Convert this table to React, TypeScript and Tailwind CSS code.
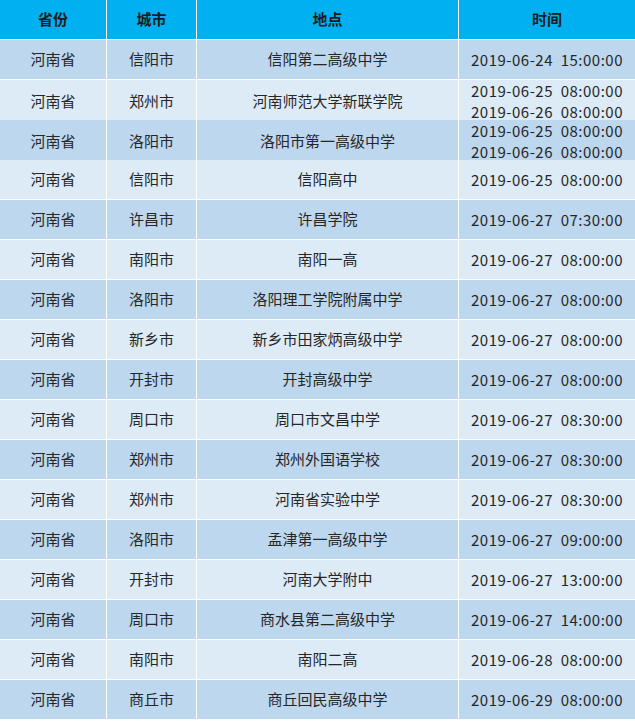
const rows: [string, string, string, string[]][] = [
  ["河南省", "信阳市", "信阳第二高级中学", ["2019-06-24  15:00:00"]],
  ["河南省", "郑州市", "河南师范大学新联学院", ["2019-06-25  08:00:00", "2019-06-26  08:00:00"]],
  ["河南省", "洛阳市", "洛阳市第一高级中学", ["2019-06-25  08:00:00", "2019-06-26  08:00:00"]],
  ["河南省", "信阳市", "信阳高中", ["2019-06-25  08:00:00"]],
  ["河南省", "许昌市", "许昌学院", ["2019-06-27  07:30:00"]],
  ["河南省", "南阳市", "南阳一高", ["2019-06-27  08:00:00"]],
  ["河南省", "洛阳市", "洛阳理工学院附属中学", ["2019-06-27  08:00:00"]],
  ["河南省", "新乡市", "新乡市田家炳高级中学", ["2019-06-27  08:00:00"]],
  ["河南省", "开封市", "开封高级中学", ["2019-06-27  08:00:00"]],
  ["河南省", "周口市", "周口市文昌中学", ["2019-06-27  08:30:00"]],
  ["河南省", "郑州市", "郑州外国语学校", ["2019-06-27  08:30:00"]],
  ["河南省", "郑州市", "河南省实验中学", ["2019-06-27  08:30:00"]],
  ["河南省", "洛阳市", "孟津第一高级中学", ["2019-06-27  09:00:00"]],
  ["河南省", "开封市", "河南大学附中", ["2019-06-27  13:00:00"]],
  ["河南省", "周口市", "商水县第二高级中学", ["2019-06-27  14:00:00"]],
  ["河南省", "南阳市", "南阳二高", ["2019-06-28  08:00:00"]],
  ["河南省", "商丘市", "商丘回民高级中学", ["2019-06-29  08:00:00"]],
];

const cols = "grid grid-cols-[106px_89px_261px_1fr] gap-x-px";

export default function App() {
  return (
    <div
      className="w-[635px] h-[721px] overflow-hidden bg-white text-[15px] text-[#262626]"
      style={{ fontFamily: '"Noto Sans CJK SC", "Noto Sans", sans-serif' }}
    >
      <div className="flex flex-col gap-y-px">
        <div className={`${cols} h-[39px] font-bold text-[#1c1c1c]`}>
          {["省份", "城市", "地点", "时间"].map((h) => (
            <div key={h} className="bg-[#00b0f0] flex items-center justify-center">
              {h}
            </div>
          ))}
        </div>
        {rows.map(([prov, city, place, times], i) => {
          const bg = i % 2 === 0 ? "bg-[#bdd7ee]" : "bg-[#ddebf7]";
          return (
            <div key={i} className={`${cols} h-[39px]`}>
              <div className={`${bg} flex items-center justify-center`}>{prov}</div>
              <div className={`${bg} flex items-center justify-center`}>{city}</div>
              <div className={`${bg} flex items-center justify-center`}>{place}</div>
              <div className={`${bg} flex flex-col items-center justify-center leading-[21px] tracking-[0.5px]`}>
                {times.map((t) => (
                  <span key={t} className="whitespace-pre">
                    {t}
                  </span>
                ))}
              </div>
            </div>
          );
        })}
      </div>
    </div>
  );
}
